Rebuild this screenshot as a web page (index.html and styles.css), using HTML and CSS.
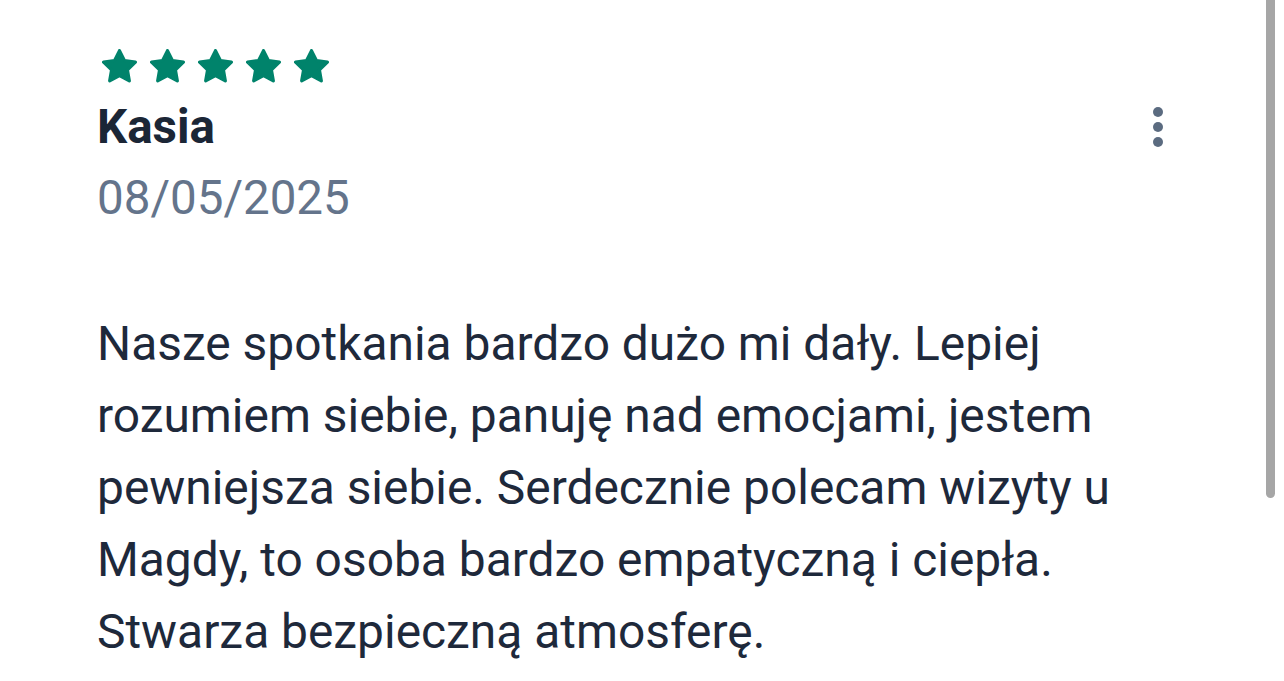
FILE: index.html
```html
<!DOCTYPE html>
<html lang="pl">
<head>
<meta charset="utf-8">
<title>Opinia</title>
<link rel="stylesheet" href="styles.css">
</head>
<body>
<main class="review">
  <div class="stars">
    <svg class="star" viewBox="1 1 22 22"><path d="M12 2l3.09 6.26L22 9.27l-5 4.87 1.18 6.88L12 17.77l-6.18 3.25L7 14.14 2 9.27l6.91-1.01z"/></svg>
    <svg class="star" viewBox="1 1 22 22"><path d="M12 2l3.09 6.26L22 9.27l-5 4.87 1.18 6.88L12 17.77l-6.18 3.25L7 14.14 2 9.27l6.91-1.01z"/></svg>
    <svg class="star" viewBox="1 1 22 22"><path d="M12 2l3.09 6.26L22 9.27l-5 4.87 1.18 6.88L12 17.77l-6.18 3.25L7 14.14 2 9.27l6.91-1.01z"/></svg>
    <svg class="star" viewBox="1 1 22 22"><path d="M12 2l3.09 6.26L22 9.27l-5 4.87 1.18 6.88L12 17.77l-6.18 3.25L7 14.14 2 9.27l6.91-1.01z"/></svg>
    <svg class="star" viewBox="1 1 22 22"><path d="M12 2l3.09 6.26L22 9.27l-5 4.87 1.18 6.88L12 17.77l-6.18 3.25L7 14.14 2 9.27l6.91-1.01z"/></svg>
  </div>
  <div class="head">
    <h2 class="name">Kasia</h2>
    <button class="more" aria-label="Więcej">
      <svg viewBox="0 0 12 42" width="12" height="42"><circle cx="6" cy="6" r="5"/><circle cx="6" cy="21" r="5"/><circle cx="6" cy="36" r="5"/></svg>
    </button>
  </div>
  <div class="date">08/05/2025</div>
  <p class="text">Nasze spotkania bardzo dużo mi dały. Lepiej rozumiem siebie, panuję nad emocjami, jestem pewniejsza siebie. Serdecznie polecam wizyty u Magdy, to osoba bardzo empatyczną i ciepła. Stwarza bezpieczną atmosferę.</p>
</main>
<div class="scrollbar"></div>
</body>
</html>
```

FILE: styles.css
```css
html, body {
  margin: 0;
  padding: 0;
  background: #ffffff;
}
body {
  font-family: Roboto, "Noto Sans", Arial, sans-serif;
  overflow: hidden;
  height: 681px;
}
.review {
  padding: 49px 0 0 97px;
  width: 1071px;
}
.stars {
  display: flex;
  gap: 13px;
  margin-left: 5px;
  height: 35px;
}
.star {
  width: 35px;
  height: 35px;
  fill: #00836b;
  stroke: #00836b;
  stroke-width: 2;
  stroke-linejoin: round;
}
.head {
  display: flex;
  align-items: center;
  justify-content: space-between;
  margin-top: 13px;
}
.name {
  margin: 0;
  font-size: 47.5px;
  line-height: 60px;
  font-weight: 700;
  color: #1b2636;
}
.more {
  border: 0;
  background: none;
  padding: 0;
  margin-right: 4px;
  display: flex;
  fill: #5b6b80;
}
.date {
  margin-top: 6px;
  font-size: 47.5px;
  line-height: 70px;
  color: #64748b;
}
.text {
  margin: 75px 0 0 0;
  width: 1030px;
  font-size: 47.9px;
  line-height: 72px;
  color: #1e293b;
}
.scrollbar {
  position: absolute;
  top: 0;
  left: 1266px;
  width: 9px;
  height: 498px;
  background: #a6a6a6;
  border-radius: 0 0 5px 5px;
}
```
